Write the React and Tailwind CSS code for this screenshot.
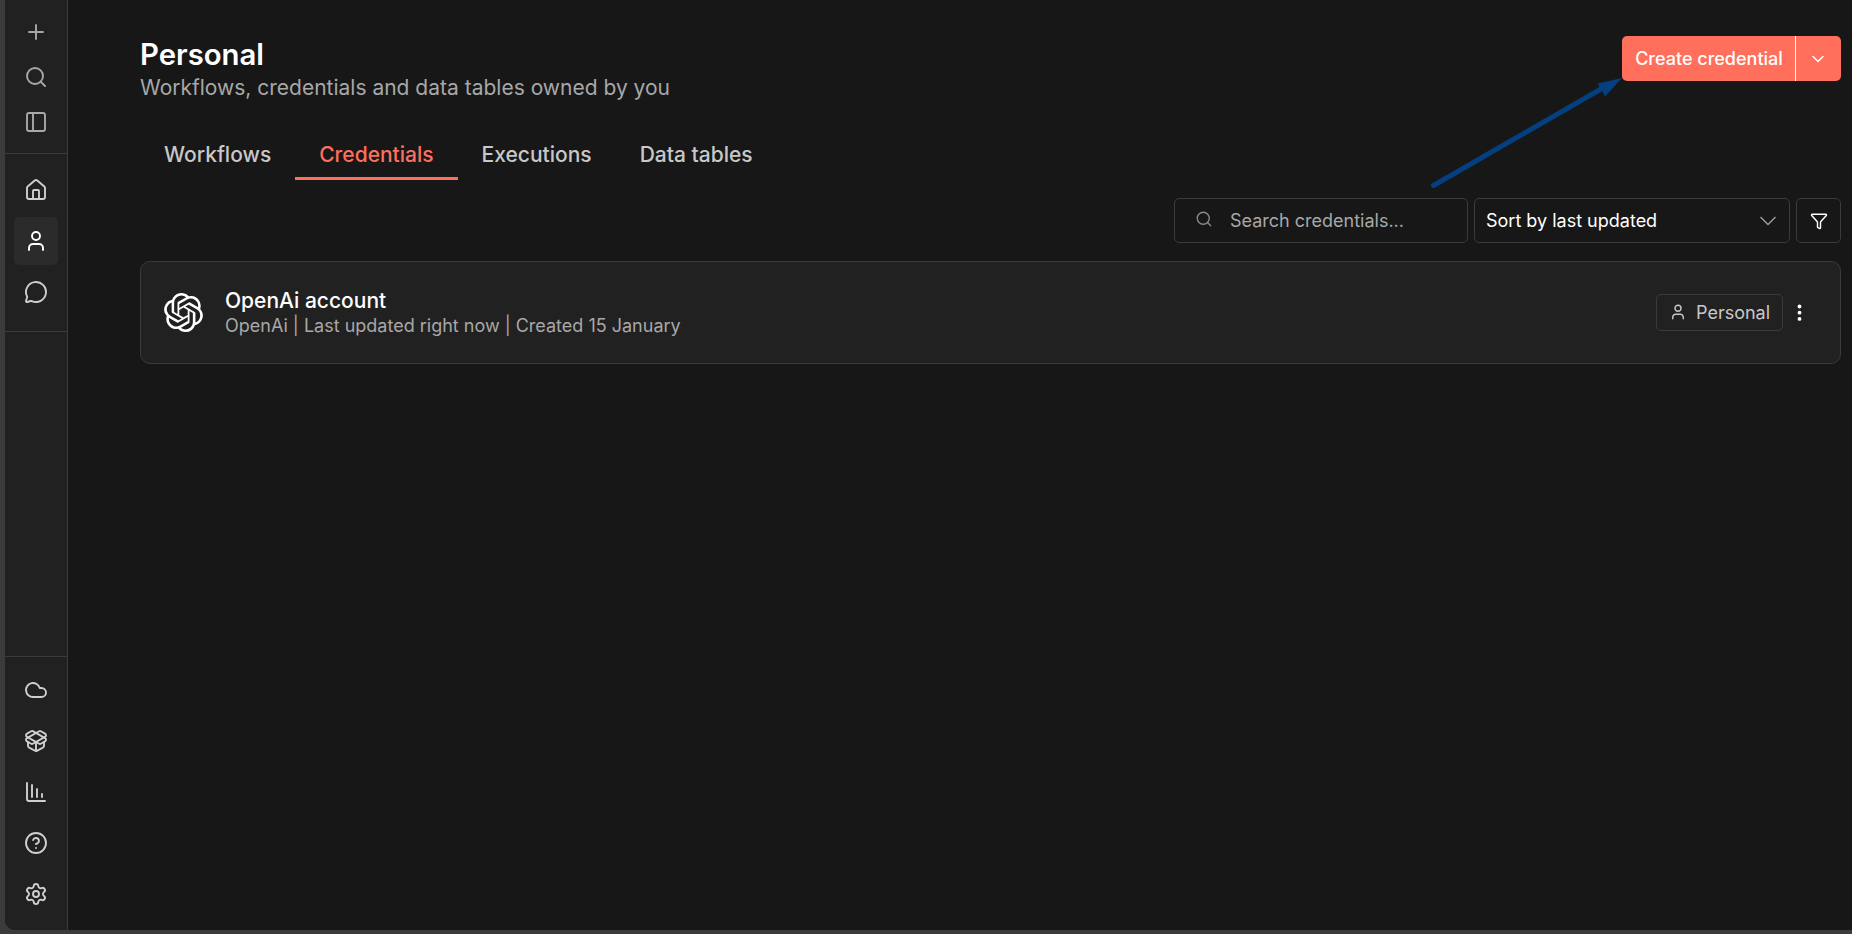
import React from 'react';
import {
  ChartColumnDecreasing,
  ChevronDown,
  CircleHelp,
  Cloud,
  Funnel,
  House,
  MessageCircle,
  PackageOpen,
  PanelLeft,
  Plus,
  Search,
  Settings,
  User,
} from 'lucide-react';
import { SiOpenai } from 'react-icons/si';

const tabs = ['Workflows', 'Credentials', 'Executions', 'Data tables'];

const Sidebar = () => (
  <nav className="flex w-[63px] shrink-0 flex-col rounded-bl-[10px] border-r border-[#3b3b3b] bg-[#212121] text-[#cfcfcf]">
    <div className="flex h-[154px] flex-col items-center gap-[21px] border-b border-[#3b3b3b] pt-5 text-[#a8a8a8]">
      <Plus size={24} strokeWidth={1.9} />
      <Search size={24} strokeWidth={1.9} />
      <PanelLeft size={24} strokeWidth={1.9} />
    </div>
    <div className="flex h-[178px] flex-col items-center gap-[3px] border-b border-[#3b3b3b] pt-3">
      <div className="flex h-12 w-11 items-center justify-center">
        <House size={24} strokeWidth={1.9} />
      </div>
      <div className="flex h-12 w-11 items-center justify-center rounded-[5px] bg-[#2b2b2b] text-white">
        <User size={24} strokeWidth={1.9} />
      </div>
      <div className="flex h-12 w-11 items-center justify-center">
        <MessageCircle size={24} strokeWidth={1.9} />
      </div>
    </div>
    <div className="mt-auto flex h-[274px] flex-col items-center gap-[27px] border-t border-[#3b3b3b] pt-[21px]">
      <Cloud size={24} strokeWidth={1.9} />
      <PackageOpen size={24} strokeWidth={1.9} />
      <ChartColumnDecreasing size={24} strokeWidth={1.9} />
      <CircleHelp size={24} strokeWidth={1.9} />
      <Settings size={24} strokeWidth={1.9} />
    </div>
  </nav>
);

const Header = () => (
  <header className="flex items-start justify-between">
    <div>
      <h1 className="text-[29.3px] leading-[37px] font-semibold text-white">Personal</h1>
      <p className="text-[21px] leading-[29px] text-[#a8a8a8]">
        Workflows, credentials and data tables owned by you
      </p>
    </div>
    <div className="flex h-[45px] overflow-hidden rounded-[5px] bg-[#ff6f5c] text-white">
      <button className="w-[173px] pl-px text-[18px] font-medium">Create credential</button>
      <button className="flex w-[46px] items-center justify-center border-l border-white pr-px">
        <ChevronDown size={20} strokeWidth={1.8} />
      </button>
    </div>
  </header>
);

const Tabs = () => (
  <div className="mt-[27px] flex h-[51px]">
    {tabs.map(tab => (
      <button
        key={tab}
        className={
          tab === 'Credentials'
            ? 'border-b-3 border-[#ff6f5c] px-[24px] pt-[3px] text-[21px] font-medium text-[#ff6f5c]'
            : 'border-b-3 border-transparent px-[24px] pt-[3px] text-[21px] font-medium text-[#c8c8c8]'
        }>
        {tab}
      </button>
    ))}
  </div>
);

const Filters = () => (
  <div className="mt-[18px] flex justify-end gap-1.5">
    <div className="flex h-[45px] w-[294px] items-center rounded-[5px] border border-[#3b3b3b] pl-5">
      <Search size={18} strokeWidth={1.8} className="mb-[3px] text-[#8a8a8a]" />
      <span className="ml-[17px] text-[18px] text-[#a8a8a8]">Search credentials...</span>
    </div>
    <div className="flex h-[45px] w-[316px] items-center justify-between rounded-[5px] border border-[#3b3b3b] pr-[10px] pl-[11px]">
      <span className="text-[18px] text-white">Sort by last updated</span>
      <svg width="22" height="22" viewBox="0 0 22 22" fill="none" stroke="#a0a0a0" strokeWidth="1.3">
        <path d="M3.500 7 11 14.500l7.500-7.500" />
      </svg>
    </div>
    <button className="flex h-[45px] w-[45px] items-center justify-center rounded-[5px] border border-[#3b3b3b] pl-px text-white">
      <Funnel size={18} strokeWidth={1.9} />
    </button>
  </div>
);

const CredentialCard = () => (
  <div className="mt-[18px] flex h-[103px] items-center rounded-[10px] border border-[#3b3b3b] bg-[#212121] pl-[23px]">
    <SiOpenai size={39} className="text-white" />
    <div className="ml-[22px]">
      <h2 className="text-[21px] leading-[27px] font-medium text-white">OpenAi account</h2>
      <p className="text-[18px] leading-[24px] text-[#a8a8a8]">
        OpenAi | Last updated right now | Created 15 January
      </p>
    </div>
    <div className="ml-auto flex h-[37px] w-[127px] items-center rounded-[5px] border border-[#3b3b3b] pb-px pl-3">
      <User size={18} strokeWidth={1.9} className="text-[#c8c8c8]" />
      <span className="ml-[9px] text-[18px] text-[#c8c8c8]">Personal</span>
    </div>
    <svg className="mr-[33px] ml-[8px]" width="16" height="24" viewBox="0 0 16 24" fill="white">
      <circle cx="8.500" cy="5.500" r="1.900" />
      <circle cx="8.500" cy="11.700" r="1.900" />
      <circle cx="8.500" cy="17.900" r="1.900" />
    </svg>
  </div>
);

const App = () => (
  <div className="relative h-[934px] w-[1852px] overflow-hidden bg-[#3b3b3b] pb-[4px] pl-[5px] font-[Inter,sans-serif]">
    <div className="flex h-full overflow-hidden rounded-bl-[10px] bg-[#171717]">
      <Sidebar />
      <main className="flex-1 pt-[36px] pr-[11px] pl-[72px]">
        <Header />
        <Tabs />
        <Filters />
        <CredentialCard />
      </main>
    </div>
    {/* pointer to the create button */}
    <svg className="absolute top-[70px] left-[1425px]" width="200" height="124" viewBox="1425 70 200 124">
      <path d="M1433.500 185.500 1601 89" stroke="#043f80" strokeWidth="5" strokeLinecap="round" />
      <path d="M1622 78 1597.500 83.500 1601 89 1605 96.500Z" fill="#043f80" />
    </svg>
  </div>
);

export default App;
